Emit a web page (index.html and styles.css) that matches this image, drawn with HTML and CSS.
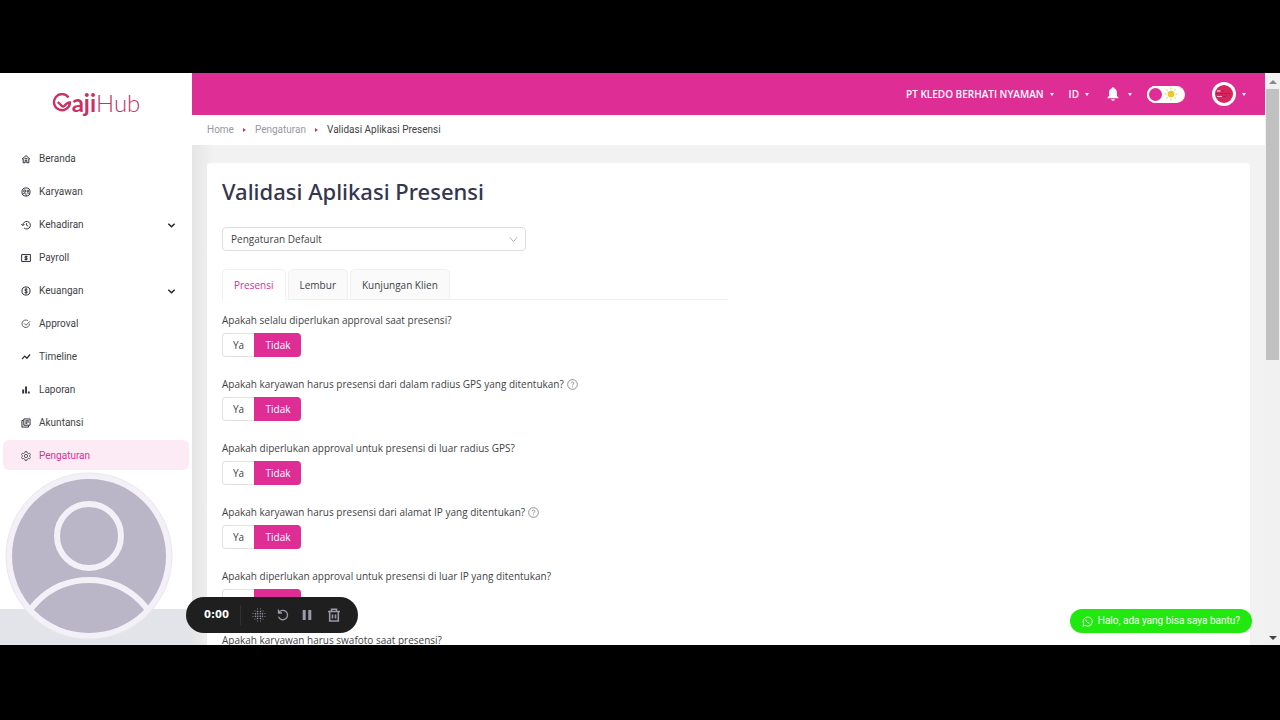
FILE: index.html
```html
<!DOCTYPE html>
<html lang="id">
<head>
<meta charset="utf-8">
<title>Validasi Aplikasi Presensi - GajiHub</title>
<link rel="stylesheet" href="styles.css">
</head>
<body>
<div class="app">
  <aside class="sidebar">
    <a class="logo" href="#" aria-label="GajiHub">
      <svg class="logo-mark" viewBox="0 0 20 20" aria-hidden="true"><path d="M16.500 4.500A8 8 0 1 0 18 9.500c-1.500-.3-2.600.4-3.600 1.400l-2 2c-1 .8-1.800.8-2.600 0L5.800 9"/></svg><span class="logo-bold">aji</span><span class="logo-thin">Hub</span>
    </a>
    <nav class="menu">
      <a class="menu-item" href="#"><svg class="icon" viewBox="0 0 16 16"><path d="M1.500 8.500L8 2.500l6.500 6M3.500 7.500V14h3.200v-4h2.600v4h3.200V7.500M5.500 7.500h5"/></svg>Beranda</a>
      <a class="menu-item" href="#"><svg class="icon" viewBox="0 0 16 16"><circle cx="8" cy="8" r="6.500"/><circle cx="6" cy="6.500" r="1.800"/><circle cx="11" cy="6.500" r="1.300"/><path d="M2.500 11.500c2-2.500 5-2.500 6 2.500M9 10c2-1 4 0 5 1"/></svg>Karyawan</a>
      <a class="menu-item" href="#"><svg class="icon" viewBox="0 0 16 16"><path d="M3 8.500a6 6 0 1 1 2 4.300M.5 6.500L3 9l2.500-2.500M9 5v3.500l2.500 1.500"/></svg>Kehadiran<svg class="chevron" viewBox="0 0 10 10"><path d="M1.500 3L5 6.500 8.500 3"/></svg></a>
      <a class="menu-item" href="#"><svg class="icon" viewBox="0 0 16 16"><path d="M1 2.500h14v11H1zM10.500 5.700H6.500V8h3.200v2.300H5.500M8 4v8"/></svg>Payroll</a>
      <a class="menu-item" href="#"><svg class="icon" viewBox="0 0 16 16"><circle cx="8" cy="8" r="6.500"/><path d="M10.300 6c-.5-1.500-4.300-1.500-4.300.3C6 8.300 10.200 7.500 10.200 9.700c0 1.900-4.200 1.700-4.500 0M8 3.500v9"/></svg>Keuangan<svg class="chevron" viewBox="0 0 10 10"><path d="M1.500 3L5 6.500 8.500 3"/></svg></a>
      <a class="menu-item" href="#"><svg class="icon icon-light" viewBox="0 0 16 16"><path d="M13.600 7.500A6 6 0 1 1 11 2.700M5 7l3 3 6.500-6.500"/></svg>Approval</a>
      <a class="menu-item" href="#"><svg class="icon icon-heavy" viewBox="0 0 16 16"><path d="M1.500 11.500l4.500-5 3.500 3.500 5-6"/></svg>Timeline</a>
      <a class="menu-item" href="#"><svg class="icon icon-bars" viewBox="0 0 16 16"><path d="M3.500 13.500V7M8 13.500v-11M12.500 13.500v-3"/></svg>Laporan</a>
      <a class="menu-item" href="#"><svg class="icon" viewBox="0 0 16 16"><path d="M4.500 1.500h10v10h-10zM3.500 4h-2v10.500H12v-2M7 4.500h5.500M7 6.500h5.500M7 8.500h3"/></svg>Akuntansi</a>
      <a class="menu-item active" href="#" aria-current="page"><svg class="icon icon-light" viewBox="0 0 16 16"><path d="M6.500 1h3l.6 2 1.700 1 2-.5L15.300 6l-1.500 1.500v1l1.500 1.500-1.500 2.500-2-.5-1.700 1-.6 2h-3l-.6-2-1.700-1-2 .5L.7 10l1.500-1.500v-1L.7 6l1.500-2.500 2 .5 1.700-1z"/><circle cx="8" cy="8" r="2.600"/></svg>Pengaturan</a>
    </nav>
    <div class="sidebar-foot"></div>
  </aside>

  <div class="page">
    <header class="topbar">
      <button class="top-button" type="button">PT KLEDO BERHATI NYAMAN<span class="caret"></span></button>
      <button class="top-button" type="button">ID<span class="caret"></span></button>
      <button class="top-button bell" type="button" aria-label="Notifikasi"><svg viewBox="0 0 14 16"><path d="M7 0a1.300 1.300 0 0 0-1.300 1.300C3.500 2 2.500 4 2.500 6.200V10L.5 12.300V13h13v-.7L11.500 10V6.200C11.500 4 10.500 2 8.300 1.300A1.300 1.300 0 0 0 7 0zM5 14a2 2 0 0 0 4 0z"/></svg><span class="caret"></span></button>
      <label class="theme"><input type="checkbox" aria-label="Mode gelap"><span class="knob"></span><svg viewBox="0 0 14 14"><circle cx="7" cy="7" r="3"/><path d="M7 .5v2M7 11.500v2M.5 7h2M11.500 7h2M2.400 2.400l1.300 1.300M10.300 10.300l1.300 1.300M2.400 11.600l1.300-1.300M10.300 3.700l1.300-1.300"/></svg></label>
      <button class="top-button account" type="button" aria-label="Akun"><svg viewBox="0 0 24 24" stroke="none"><circle cx="12" cy="12" r="12" fill="#fff"/><circle cx="12" cy="12" r="9" fill="#d8245f"/><path d="M5 8.500h3.500v1H5z" fill="#fff"/><path d="M9.500 8.500h3v1h-3zM4 11h14v1H4zM11 14h3v1h-3z" fill="#a82052"/><path d="M5 14h5v1H5z" fill="#f4b3ca"/></svg><span class="caret"></span></button>
    </header>
    <nav class="breadcrumb" aria-label="Breadcrumb">
      <a href="#">Home</a><span class="crumb-arrow"></span><a href="#">Pengaturan</a><span class="crumb-arrow"></span><span>Validasi Aplikasi Presensi</span>
    </nav>
    <main class="content">
      <section class="card">
        <h1>Validasi Aplikasi Presensi</h1>
        <div class="select-wrap">
          <select class="select" aria-label="Pengaturan"><option>Pengaturan Default</option></select>
          <svg viewBox="0 0 10 10"><path d="M1 2.500L5 7.500 9 2.500"/></svg>
        </div>
        <div class="tabs" role="tablist">
          <button class="tab selected" type="button" role="tab" aria-selected="true">Presensi</button>
          <button class="tab" type="button" role="tab" aria-selected="false">Lembur</button>
          <button class="tab" type="button" role="tab" aria-selected="false">Kunjungan Klien</button>
        </div>
        <form class="questions">
          <fieldset class="question"><legend>Apakah selalu diperlukan approval saat presensi?</legend>
            <div class="choice"><label><input type="radio" name="q1">Ya</label><label><input type="radio" name="q1" checked>Tidak</label></div></fieldset>
          <fieldset class="question"><legend>Apakah karyawan harus presensi dari dalam radius GPS yang ditentukan?<svg class="help" viewBox="0 0 12 12"><circle cx="6" cy="6" r="5.300"/><path d="M4.500 4.800C4.500 2.800 7.600 2.900 7.500 4.700 7.400 5.700 6 5.700 6 7M6 8v1"/></svg></legend>
            <div class="choice"><label><input type="radio" name="q2">Ya</label><label><input type="radio" name="q2" checked>Tidak</label></div></fieldset>
          <fieldset class="question"><legend>Apakah diperlukan approval untuk presensi di luar radius GPS?</legend>
            <div class="choice"><label><input type="radio" name="q3">Ya</label><label><input type="radio" name="q3" checked>Tidak</label></div></fieldset>
          <fieldset class="question"><legend>Apakah karyawan harus presensi dari alamat IP yang ditentukan?<svg class="help" viewBox="0 0 12 12"><circle cx="6" cy="6" r="5.300"/><path d="M4.500 4.800C4.500 2.800 7.600 2.900 7.500 4.700 7.400 5.700 6 5.700 6 7M6 8v1"/></svg></legend>
            <div class="choice"><label><input type="radio" name="q4">Ya</label><label><input type="radio" name="q4" checked>Tidak</label></div></fieldset>
          <fieldset class="question"><legend>Apakah diperlukan approval untuk presensi di luar IP yang ditentukan?</legend>
            <div class="choice"><label><input type="radio" name="q5">Ya</label><label><input type="radio" name="q5" checked>Tidak</label></div></fieldset>
          <fieldset class="question"><legend>Apakah karyawan harus swafoto saat presensi?</legend></fieldset>
        </form>
      </section>
    </main>
  </div>

  <div class="scrollbar" aria-hidden="true"><span class="arrow-up"></span><span class="thumb"></span><span class="arrow-down"></span></div>

  <svg class="camera" viewBox="0 0 168 168" aria-hidden="true">
    <defs><clipPath id="face"><circle cx="84" cy="84" r="78"/></clipPath></defs>
    <circle cx="84" cy="84" r="83" fill="#f3f1f7" stroke="#e9e9ee"/>
    <circle cx="84" cy="84" r="77" fill="#bab5c7"/>
    <g clip-path="url(#face)" fill="none" stroke="#f3f1f7" stroke-width="6"><circle cx="84" cy="64" r="32"/><circle cx="84" cy="181" r="73"/></g>
  </svg>

  <div class="recorder">
    <span class="time">0:00</span>
    <button type="button" aria-label="Efek"><svg viewBox="0 0 14 14"><path class="dots" d="M5.500 1v.01M8.500 1v.01M1 5.500v.01M1 8.500v.01M13 5.500v.01M13 8.500v.01M5.500 13v.01M8.500 13v.01M3 3v.01M11 3v.01M3 11v.01M11 11v.01"/><path class="dots dots-big" d="M5.500 3.500v.01M8.500 3.500v.01M3.500 5.700v.01M5.700 5.700v.01M8.300 5.700v.01M10.500 5.700v.01M3.500 8.300v.01M5.700 8.300v.01M8.300 8.300v.01M10.500 8.300v.01M5.500 10.500v.01M8.500 10.500v.01"/></svg></button>
    <button type="button" aria-label="Ulangi"><svg viewBox="0 0 14 14"><path d="M2.500 1.500v3.500H6M2.700 4.800A4.700 4.700 0 1 1 2.500 8.800"/></svg></button>
    <button type="button" aria-label="Jeda"><svg viewBox="0 0 14 14"><path class="pause" d="M4.200 2v10M9.800 2v10"/></svg></button>
    <button class="delete" type="button" aria-label="Hapus"><svg viewBox="0 0 14 14"><path class="trash" d="M1 3.500h12M4.500 3V1.200h5V3M2.700 4v9h8.600V4M5.500 6.500v4M8.500 6.500v4"/></svg></button>
  </div>

  <button class="chat" type="button"><svg viewBox="0 0 12 12"><path d="M1 11l.8-2.500A5 5 0 1 1 3.500 10.300z"/><path d="M4.200 3.800c-.3 1.700 2.200 4.200 4 4"/></svg>Halo, ada yang bisa saya bantu?</button>
</div>
</body>
</html>
```
FILE: styles.css
```css
* { box-sizing: border-box; }

body {
  margin: 0;
  height: 100vh;
  padding: 73px 0 75px;
  background: #000;
  color: #3f3f46;
  font: 10px/20px "Open Sans", "Noto Sans", sans-serif;
}

button, select { font: inherit; color: inherit; }
button { border: 0; background: none; padding: 0; }
a { color: inherit; text-decoration: none; }
svg { display: block; flex: none; fill: none; stroke: currentColor; }

.app {
  position: relative;
  display: flex;
  height: 100%;
  overflow: hidden;
  background: #f2f2f2;
}

.sidebar {
  display: flex;
  flex-direction: column;
  flex: 0 0 192px;
  background: #fff;
}
.logo {
  display: flex;
  align-items: center;
  justify-content: center;
  height: 60px;
  margin-bottom: 10px;
  color: #cb2f65;
  font: 24px/30px Lato, sans-serif;
}
.logo-mark { width: 20px; height: 20px; stroke-width: 2.400; }
.logo-bold { font-weight: 700; }
.logo-thin { font-weight: 300; }

.menu {
  display: flex;
  flex-direction: column;
  gap: 3px;
  padding: 0 3px;
}
.menu, .breadcrumb, .chat { font-family: Roboto, sans-serif; }
.menu-item {
  display: flex;
  align-items: center;
  gap: 8px;
  height: 30px;
  padding: 2px 13px 0 18px;
  border-radius: 6px;
}
.menu-item.active { background: #fcebf4; color: #dd2e96; }
.icon { width: 10px; height: 10px; stroke: #2f2f3a; stroke-width: 1.600; }
.icon-light { stroke-width: 1.200; }
.icon-heavy { stroke-width: 2; }
.icon-bars { stroke-width: 3; }
.chevron { width: 9px; height: 9px; margin-left: auto; stroke: #222; stroke-width: 1.600; }
.sidebar-foot { height: 36px; margin-top: auto; background: #e2e4e9; }

.page {
  display: flex;
  flex-direction: column;
  flex: 1;
  min-width: 0;
}
.topbar {
  display: flex;
  align-items: center;
  justify-content: flex-end;
  flex: 0 0 42px;
  gap: 15px;
  padding-right: 19px;
  background: #de2e96;
  color: #fff;
  font-weight: 600;
}
.top-button { display: flex; align-items: center; gap: 6px; }
.caret {
  border: 2px solid transparent;
  border-top: 3px solid #fff;
  border-bottom: 0;
}
.bell { gap: 9px; margin-left: 3px; }
.bell svg { width: 12px; height: 14px; fill: #fff; stroke: none; }
.account { margin-left: 12px; }
.account svg { width: 24px; height: 24px; stroke: none; }
.theme {
  display: flex;
  align-items: center;
  justify-content: space-between;
  width: 38px;
  height: 17px;
  padding-right: 7px;
  border-radius: 9px;
  background: #fff;
}
.theme input, .choice input { position: absolute; opacity: 0; }
.knob {
  width: 17px;
  height: 17px;
  border: 2px solid #fff;
  border-radius: 50%;
  background: #de2e96;
}
.theme svg { width: 14px; height: 14px; fill: #ebc92d; stroke: #ebc92d; stroke-width: 1; }

.breadcrumb {
  display: flex;
  align-items: center;
  flex: 0 0 30px;
  padding: 0 15px;
  background: #fff;
}
.breadcrumb a { color: #98989d; }
.crumb-arrow {
  margin: 0 9px;
  border: 2px solid transparent;
  border-left: 3px solid #de2e5c;
  border-right: 0;
}

.content {
  flex: 1;
  min-height: 0;
  padding: 18px 15px 0;
  background: linear-gradient(90deg, #e5e5e5, #f2f2f2 22px);
}
.card {
  padding: 13px 15px;
  border-radius: 4px;
  background: #fff;
}
.card h1 {
  margin: 0 0 21px;
  color: #34364e;
  font: 500 22px/30px "Noto Sans", sans-serif;
}
.select-wrap {
  display: flex;
  align-items: center;
  position: relative;
  width: 304px;
  margin-bottom: 18px;
}
.select {
  width: 100%;
  height: 24px;
  padding: 0 8px;
  border: 1px solid #dedede;
  border-radius: 4px;
  background: #fff;
  appearance: none;
}
.select-wrap svg {
  position: absolute;
  right: 8px;
  width: 9px;
  height: 9px;
  stroke: #aaa;
  pointer-events: none;
}
.tabs {
  display: flex;
  gap: 2px;
  width: 506px;
  border-bottom: 1px solid #f0f0f0;
}
.tab {
  height: 31px;
  margin-bottom: -1px;
  padding: 0 11px;
  border: 1px solid #f0f0f0;
  border-radius: 5px 5px 0 0;
  background: #fafafa;
}
.tab.selected { border-bottom-color: #fff; background: #fff; color: #de2e96; }

.questions {
  display: flex;
  flex-direction: column;
  gap: 17px;
  padding-top: 10px;
}
.question { margin: 0; padding: 0; border: 0; }
.question legend { display: flex; align-items: center; gap: 3px; padding: 0; }
.help { width: 11px; height: 11px; stroke: #888; stroke-width: 1; }
.choice { display: flex; padding-top: 3px; }
.choice label {
  display: flex;
  align-items: center;
  justify-content: center;
  width: 32px;
  height: 24px;
  border: 1px solid #e2e2e2;
  border-right: 0;
  border-radius: 4px 0 0 4px;
}
.choice label:last-child {
  width: 47px;
  border-color: #de2e96;
  border-radius: 0 4px 4px 0;
  background: #de2e96;
  color: #fff;
}

.scrollbar {
  display: flex;
  flex-direction: column;
  align-items: center;
  flex: 0 0 15px;
  padding: 7px 0 5px;
  background: #f1f1f1;
}
.scrollbar .arrow-up { border: 4px solid transparent; border-top: 0; border-bottom-color: #888; }
.scrollbar .thumb { width: 13px; height: 271px; margin-top: 5px; background: #c1c1c1; }
.scrollbar .arrow-down { margin-top: auto; border: 4px solid transparent; border-bottom: 0; border-top-color: #444; }

.camera {
  position: absolute;
  left: 5px;
  bottom: 5px;
  width: 168px;
  height: 168px;
  stroke: none;
}

.recorder {
  position: absolute;
  left: 186px;
  bottom: 12px;
  display: flex;
  align-items: center;
  gap: 10px;
  height: 36px;
  padding: 0 17px 0 18px;
  border-radius: 18px;
  background: #1f1f1f;
  color: #9c99a8;
}
.time {
  margin-right: 1px;
  padding-right: 11px;
  border-right: 1px solid #303030;
  color: #fff;
  font: bold 10px/20px "DejaVu Sans", sans-serif;
}
.recorder svg { width: 14px; height: 14px; stroke-width: 1.300; }
.recorder .dots { stroke-linecap: round; stroke-width: 1; }
.recorder .dots-big { stroke-width: 1.600; }
.recorder .pause { stroke-width: 3; }
.recorder .trash { stroke-width: 1.600; }
.recorder .delete { margin-left: 3px; }

.chat {
  position: absolute;
  right: 28px;
  bottom: 12px;
  display: flex;
  align-items: center;
  gap: 5px;
  height: 24px;
  padding: 0 12px;
  border-radius: 12px;
  background: #21e80f;
  color: #fff;
}
.chat svg { width: 11px; height: 11px; }
```
